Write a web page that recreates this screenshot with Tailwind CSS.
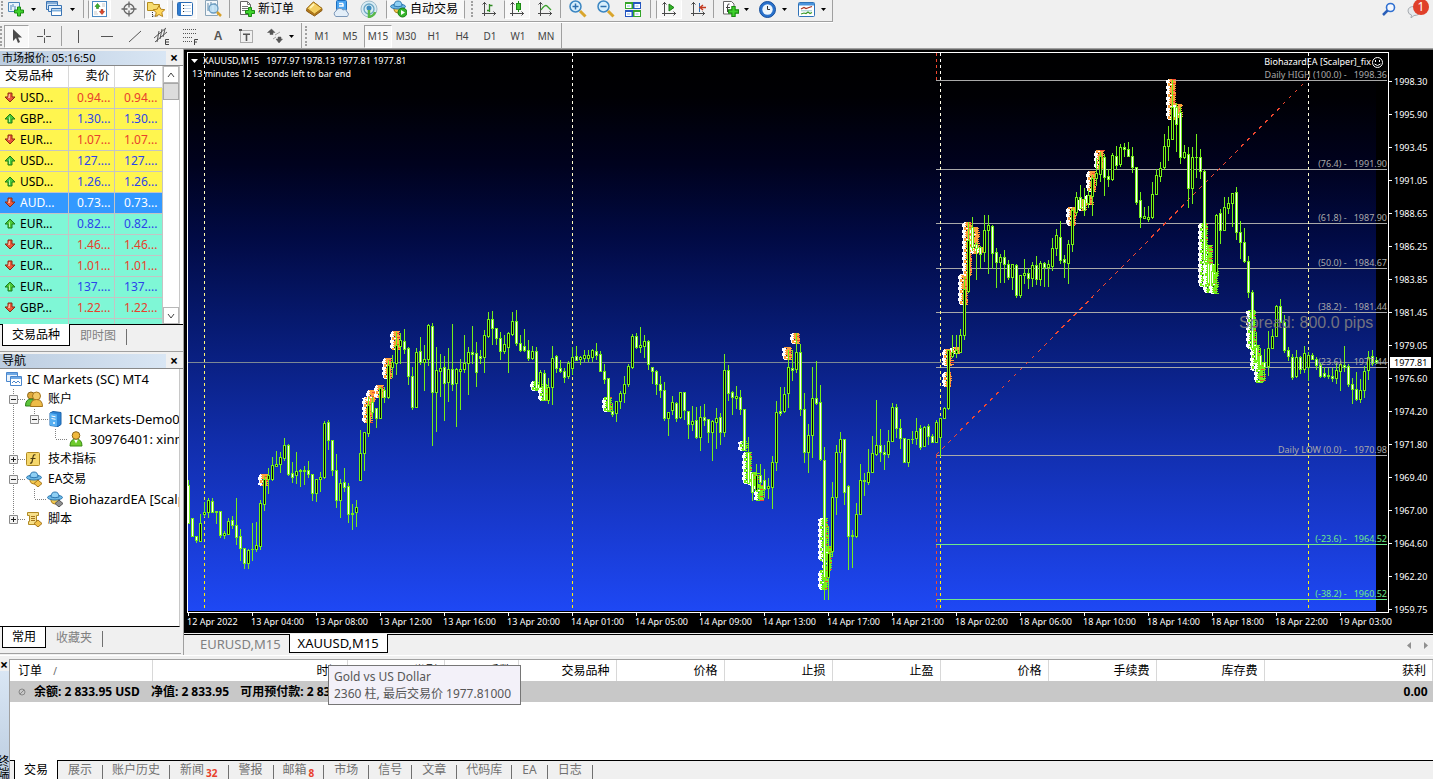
<!DOCTYPE html>
<html lang="zh-CN">
<head>
    <meta charset="UTF-8">
    <meta name="viewport" content="width=device-width, initial-scale=1.0">
    <title>IC Markets (SC) MT4 - XAUUSD,M15</title>
    <script src="https://cdn.jsdelivr.net/npm/@tailwindcss/browser@4"></script>
</head>
<body class="min-h-screen flex flex-col overflow-x-hidden bg-[#f0f0f0] text-black text-xs font-['Noto_Sans','Noto_Sans_CJK_SC',sans-serif]">

<!-- Shared icons -->
<svg class="hidden" aria-hidden="true">
    <symbol id="plus" viewBox="0 0 10 10"><path d="M3.5 .5h3v3h3v3h-3v3h-3v-3h-3v-3h3z" fill="#3fd22c" stroke="#1a8a12"/></symbol>
    <symbol id="down" viewBox="0 0 12 12"><path d="M4 1h4v4h3L6 10 1 5h3z" fill="#ea5a3a" stroke="#8c2a14"/><path d="M5 2h1v4H4z" fill="#ffb49c"/></symbol>
    <symbol id="up" viewBox="0 0 12 12"><path d="M6 1l5 5H8v4H4V6H1z" fill="#4cc838" stroke="#1f7a18"/><path d="M6 3v6H5V5z" fill="#b8f5a4"/></symbol>
    <symbol id="hat" viewBox="0 0 16 16">
        <path d="M4 7h8v3q-1 3-4 3t-4-3z" fill="#f3c94f" stroke="#a97c1b"/>
        <ellipse cx="8" cy="6.500" rx="7.500" ry="2.500" fill="#6db9e6" stroke="#2f78b0"/>
        <path d="M4 6q0-5 4-5t4 5q-4 1.500-8 0z" fill="#8fd0f4" stroke="#2f78b0"/>
    </symbol>
    <symbol id="caret" viewBox="0 0 5 3"><path d="M0 0h5L2.500 3z" fill="#000"/></symbol>
    <symbol id="axes" viewBox="0 0 16 16"><path d="M3.500 1v14M1.500 3.500l2-2 2 2M1 12.500h14M12.500 10.500l2 2-2 2" fill="none" stroke="#4a4a4a"/></symbol>
</svg>

<header class="leading-none">
    <div class="flex h-[23px] items-start">
        <div class="flex h-[22px] items-center border-b border-r border-[#a0a0a0] pb-[3px] shadow-[0_1px_0_#fff]">
            <span class="h-4 w-[3px] border-r-2 border-dotted border-[#a0a0a0]"></span>
            <button class="ml-[5px] flex items-center gap-[7px]" aria-label="新图表">
                <svg class="size-4" viewBox="0 0 16 16"><path d="M.5 1.500h11v9H.5z" fill="#eaf4fc" stroke="#4d86b8"/><path d="M3 4v5M5 3v3M7 5v4" stroke="#4d86b8"/><use href="#plus" x="6" y="5" width="10" height="11"/></svg>
                <svg class="h-[3px] w-[5px]"><use href="#caret"/></svg>
            </button>
            <button class="ml-[10px] flex items-center gap-[8px]" aria-label="配置文件">
                <svg class="size-4" viewBox="0 0 16 16"><path d="M.5 .5h11v8H.5z" fill="#cfe4f7" stroke="#3a74b4"/><path d="M1 2h10" stroke="#3a74b4"/><path d="M2.500 4.500h13v6h-13z" fill="#e7f2fc" stroke="#3a74b4"/><path d="M5.500 7.500h10v7h-10z" fill="#fff" stroke="#3a74b4"/><path d="M6 9.500h9" stroke="#7fb0de" stroke-width="2"/></svg>
                <svg class="h-[3px] w-[5px]"><use href="#caret"/></svg>
            </button>
            <span class="ml-[8px] h-[18px] w-px bg-[#a0a0a0]"></span>
            <button class="ml-[4px] flex h-[19px] w-[23px] items-center justify-center border border-[#a0a0a0] border-b-white border-r-white border-t-transparent bg-[#f8f8f8]" aria-label="市场报价">
                <svg class="size-4" viewBox="0 0 16 16"><rect x=".5" y=".5" width="14" height="15" fill="#fff" stroke="#4a8ac4"/><path d="M5.500 2.500l2.500 3H6.500v2h-2v-2H3z" fill="#3cb52c" stroke="#1f7a18" stroke-width=".6"/><path d="M10 13.500l-2.500-3H9v-2h2v2h1.500z" fill="#e2492c" stroke="#9c2a14" stroke-width=".6"/><path d="M2 11h3M2 13h4M10 3h3M10 5h3" stroke="#c9c9c9"/></svg>
            </button>
            <button class="ml-[6px] flex w-[24px] justify-center" aria-label="数据窗口">
                <svg class="size-4" viewBox="0 0 16 16"><circle cx="8" cy="8" r="5" fill="none" stroke="#666" stroke-width="1.300"/><path d="M8 .5v6M8 9.500v6M.5 8h6M9.500 8h6" stroke="#666" stroke-width="1.300"/></svg>
            </button>
            <button class="ml-[3px] flex h-[19px] w-[24px] items-center justify-center border border-[#a0a0a0] border-b-white border-r-white border-t-transparent bg-[#f8f8f8]" aria-label="导航">
                <svg class="size-[18px]" viewBox="0 0 18 18"><path d="M.5 2.500h5l1 2h6v6H.5z" fill="#f7dc6f" stroke="#b58d1c"/><path d="M5.500 12v5M5.500 16h5" stroke="#333" stroke-dasharray="1 1"/><path d="M12 5.500l1.800 3.700 4 .5-3 2.800.8 4-3.600-2-3.600 2 .8-4-3-2.800 4-.5z" fill="#ffd75a" stroke="#b58218"/></svg>
            </button>
            <button class="ml-[4px] flex h-[19px] w-[25px] items-center justify-center border border-[#a0a0a0] border-b-white border-r-white border-t-transparent bg-[#f8f8f8]" aria-label="终端">
                <svg class="size-4" viewBox="0 0 16 16"><rect x=".5" y="1.500" width="15" height="13" rx="1" fill="#fff" stroke="#2c6cb4"/><path d="M1 2h3v12H1z" fill="#2f7bd0"/><path d="M6 4.500h8M6 7.500h8M6 10.500h8" stroke="#c6d9ec"/><path d="M6 4.500h1M6 7.500h1M6 10.500h1" stroke="#333"/></svg>
            </button>
            <button class="ml-[4px] flex w-[24px] justify-center" aria-label="策略测试">
                <svg class="size-[18px]" viewBox="0 0 18 18"><path d="M1.500 .5h12v15h-12z" fill="#f3f7fa" stroke="#8aa4b8"/><path d="M4 3v8M7 2v9M11 3v9" stroke="#5d86a8"/><circle cx="9.500" cy="8.500" r="4.500" fill="#bfe2f6" fill-opacity=".85" stroke="#6a9cc0" stroke-width="1.300"/><path d="M13 12l4 4" stroke="#d6a02c" stroke-width="2.500"/></svg>
            </button>
            <span class="ml-[4px] h-[18px] w-px bg-[#a0a0a0]"></span>
            <button class="ml-[9px] flex items-center gap-[3px]">
                <svg class="size-4" viewBox="0 0 16 16"><path d="M1.500 .5h7l3 3v10h-10z" fill="#fff" stroke="#666"/><path d="M8.500 .5v3h3M3 5.500h6M3 7.500h6M3 9.500h4" fill="none" stroke="#777"/><use href="#plus" x="6" y="6" width="10" height="10"/></svg>
                新订单
            </button>
            <button class="ml-[11px]" aria-label="元编辑器">
                <svg class="size-[18px]" viewBox="0 0 18 18"><path d="M2 8.500L8.500 2 17 8.500v2L9.500 16 1.500 11z" fill="#b5791a" stroke="#8a5a10"/><path d="M2 8.500L8.500 2 17 8.500 9.500 14z" fill="#f4cf62" stroke="#a5751a"/><path d="M5 8l4-4" stroke="#fff3b4" stroke-width="2"/></svg>
            </button>
            <button class="ml-[9px]" aria-label="服务">
                <svg class="size-[18px]" viewBox="0 0 18 18"><rect x="4.500" y=".5" width="10" height="10" rx="1" fill="#4ba4f0" stroke="#1d6fc0"/><path d="M7 3.500h4M7 6h4v-2.500" fill="none" stroke="#fff" stroke-width="1.500"/><path d="M4 16.500a3 3 0 010-5.500 4 4 0 017-1 3 3 0 014 2 2.500 2.500 0 010 4.500z" fill="#e3eef8" stroke="#7b97b8"/></svg>
            </button>
            <button class="ml-[10px]" aria-label="信号">
                <svg class="size-[18px]" viewBox="0 0 18 18"><circle cx="9" cy="9" r="8" fill="#d9ecf4" stroke="#9fbccb"/><circle cx="9" cy="9" r="5" fill="none" stroke="#6ba6c4" stroke-width="1.300"/><circle cx="9" cy="8" r="2.500" fill="#3c8cc0"/><path d="M9 10v7q5-1 6-5" fill="none" stroke="#58b848" stroke-width="2.500"/></svg>
            </button>
            <button class="ml-[8px] flex h-[19px] items-center gap-[3px] border border-[#a0a0a0] border-b-white border-t-transparent bg-[#f8f8f8] pl-[3px] pr-[6px]">
                <svg class="h-[18px] w-[17px]" viewBox="0 0 17 18"><use href="#hat" width="16" height="16"/><circle cx="12.500" cy="12.500" r="4.500" fill="#35b42a" stroke="#1b7d14"/><path d="M11 10l4 2.500-4 2.500z" fill="#fff"/></svg>
                自动交易
            </button>
            <span class="ml-[5px] h-4 w-[3px] border-r-2 border-dotted border-[#a0a0a0]"></span>
            <button class="ml-[3px] flex w-[26px] justify-center" aria-label="柱状图">
                <svg class="size-4" viewBox="0 0 16 16"><use href="#axes"/><path d="M8.500 3v8M8.500 9.500H6M8.500 4.500h3" fill="none" stroke="#2f8a22" stroke-width="1.300"/></svg>
            </button>
            <button class="ml-[2px] flex h-[19px] w-[26px] items-center justify-center border border-[#a0a0a0] border-b-white border-r-white border-t-transparent bg-[#f8f8f8]" aria-label="阴阳烛">
                <svg class="size-4" viewBox="0 0 16 16"><use href="#axes"/><path d="M9.500 0v11" stroke="#1c8a14"/><rect x="7.500" y="2.500" width="4" height="6" fill="#3ec82e" stroke="#1c8a14"/></svg>
            </button>
            <button class="ml-[2px] flex w-[26px] justify-center" aria-label="折线图">
                <svg class="size-4" viewBox="0 0 16 16"><use href="#axes"/><path d="M4 9q4-6 6-4t4 4" fill="none" stroke="#3aa02c" stroke-width="1.300"/></svg>
            </button>
            <span class="ml-[2px] h-[18px] w-px bg-[#a0a0a0]"></span>
            <button class="ml-[8px]" aria-label="放大">
                <svg class="size-[18px]" viewBox="0 0 18 18"><circle cx="6.500" cy="6.500" r="5.500" fill="#d8effc" stroke="#3b86c2" stroke-width="1.500"/><path d="M3.500 6.500h6M6.500 3.500v6" stroke="#2c6fae" stroke-width="1.500"/><path d="M11 11l5.500 5.500" stroke="#d9a52c" stroke-width="3"/></svg>
            </button>
            <button class="ml-[10px]" aria-label="缩小">
                <svg class="size-[18px]" viewBox="0 0 18 18"><circle cx="6.500" cy="6.500" r="5.500" fill="#d8effc" stroke="#3b86c2" stroke-width="1.500"/><path d="M3.500 6.500h6" stroke="#2c6fae" stroke-width="1.500"/><path d="M11 11l5.500 5.500" stroke="#d9a52c" stroke-width="3"/></svg>
            </button>
            <button class="ml-[10px]" aria-label="平铺窗口">
                <svg class="h-[17px] w-4" viewBox="0 0 16 17"><path d="M0 1h8v7H0zM8 9h8v7H8z" fill="#34a52a"/><path d="M8 1h8v7H8zM0 9h8v7H0z" fill="#2456c0"/><path d="M1 3h5.500v4H1zM9.500 3H15v4H9.500zM1 11h5.500v4H1zM9.500 11H15v4H9.500z" fill="#fff"/><path d="M2 5h3M10.500 5h3M2 13h3M10.500 13h3" stroke="#8ab4e8"/></svg>
            </button>
            <span class="ml-[9px] h-[18px] w-px bg-[#a0a0a0]"></span>
            <button class="ml-[5px] flex h-[19px] w-[26px] items-center justify-center border border-[#a0a0a0] border-b-white border-r-white border-t-transparent bg-[#f8f8f8]" aria-label="自动滚动">
                <svg class="size-4" viewBox="0 0 16 16"><use href="#axes"/><path d="M8 3l5 3.500L8 10z" fill="#35b42a" stroke="#1b7d14"/></svg>
            </button>
            <button class="ml-[2px] flex w-[28px] justify-center" aria-label="图表平移">
                <svg class="size-4" viewBox="0 0 16 16"><use href="#axes"/><path d="M9.500 2v9" stroke="#2c6cb4"/><path d="M10 6.500h6M13 4l-3 2.500L13 9" fill="none" stroke="#c43a20" stroke-width="1.400"/></svg>
            </button>
            <span class="ml-px h-[18px] w-px bg-[#a0a0a0]"></span>
            <button class="ml-[9px] flex items-center gap-[5px]" aria-label="技术指标">
                <svg class="size-4" viewBox="0 0 16 16"><path d="M.5 .5h8l2.500 2.500v10H.5z" fill="#fff" stroke="#666"/><path d="M6.500 3Q4.500 2.500 4.500 5v6M3 6.500h4" fill="none" stroke="#444"/><use href="#plus" x="5" y="5" width="11" height="11"/></svg>
                <svg class="h-[3px] w-[5px]"><use href="#caret"/></svg>
            </button>
            <button class="ml-[10px] flex items-center gap-[6px]" aria-label="时段">
                <svg class="size-[17px]" viewBox="0 0 17 17"><circle cx="8.500" cy="8.500" r="8" fill="#2a72cc" stroke="#174f9c"/><circle cx="8.500" cy="8.500" r="5.200" fill="#eef6fc"/><path d="M8.500 5v3.500H11" fill="none" stroke="#333"/></svg>
                <svg class="h-[3px] w-[5px]"><use href="#caret"/></svg>
            </button>
            <button class="ml-[11px] mr-[6px] flex items-center gap-[6px]" aria-label="模板">
                <svg class="size-[17px]" viewBox="0 0 17 17"><rect x=".5" y="1.500" width="16" height="14" rx="1" fill="#fff" stroke="#2f72b8"/><path d="M1 2h15v2.500H1z" fill="#4a94dc"/><path d="M3 8l3-1.500 2 1 3-1 3-1" fill="none" stroke="#a83220" stroke-width="1.200"/><path d="M3 9.800h11" stroke="#9cc"/><path d="M3 13l3-1 2 .5 2-1.500 2 1.500 2-1" fill="none" stroke="#3a9a2c" stroke-width="1.200"/></svg>
                <svg class="h-[3px] w-[5px]"><use href="#caret"/></svg>
            </button>
        </div>
        <div class="ml-auto flex items-center gap-[11px] pr-1">
            <button aria-label="搜索"><svg class="h-[16px] w-[14px]" viewBox="0 0 14 16"><circle cx="8.500" cy="6.500" r="4" fill="#f4f8ff" stroke="#2f6fd0" stroke-width="1.600"/><path d="M5.500 9.500L1 14" stroke="#2a5fb8" stroke-width="2.500"/></svg></button>
            <button class="relative h-[18px] w-[22px]" aria-label="通知">
                <svg class="h-[18px] w-[22px]" viewBox="0 0 22 18"><path d="M7 6.500q-6 0-6 4.500 0 3 3.500 4l-.5 3 3-2.500q6 0 6-4.500t-6-4.500z" fill="#e6e9ec" stroke="#a6abb0"/></svg>
                <span class="absolute right-0 -top-px size-4 rounded-full bg-[#e0402a] text-center text-xs leading-4 text-white">1</span>
            </button>
        </div>
    </div>
    <div class="flex h-[26px] border-b border-[#a0a0a0]">
        <div class="flex h-[26px] items-center border-r border-[#a0a0a0]">
            <span class="h-5 w-[2px] border-r-2 border-dotted border-[#a0a0a0]"></span>
            <button class="ml-[2px] flex h-[23px] w-[25px] items-center justify-center border border-[#a0a0a0] border-b-white border-r-white bg-[#f8f8f8]" aria-label="光标"><svg class="h-4 w-3" viewBox="0 0 12 16"><path d="M2 1v12l3-3 2 5 2-1-2-4.500h4z" fill="#4a4a4a"/></svg></button>
            <button class="ml-px flex w-[28px] justify-center" aria-label="十字准线"><svg class="size-4" viewBox="0 0 16 16"><path d="M8.500 1v6M8.500 9.500V15M1 8.500h6M10 8.500h5" stroke="#555"/></svg></button>
            <span class="ml-[3px] mr-[2px] h-5 w-px bg-[#a0a0a0]"></span>
            <button class="flex w-[28px] justify-center" aria-label="垂直线"><svg class="size-4" viewBox="0 0 16 16"><path d="M8.500 2v13" stroke="#555"/></svg></button>
            <button class="flex w-[28px] justify-center" aria-label="水平线"><svg class="size-4" viewBox="0 0 16 16"><path d="M3 8.500h12" stroke="#555"/></svg></button>
            <button class="flex w-[28px] justify-center" aria-label="趋势线"><svg class="size-4" viewBox="0 0 16 16"><path d="M3 14L15 3" stroke="#555"/></svg></button>
            <button class="flex w-[28px] justify-center" aria-label="等距通道"><svg class="size-[18px]" viewBox="0 0 18 18"><path d="M1 11L13 1M2 15L14 5M4 15l2-11M7 12l2-10M10 10l2-8" stroke="#555" fill="none"/><path d="M16 12.500h-3.500v5H16M12.500 15H16" stroke="#444" fill="none"/></svg></button>
            <button class="flex w-[28px] justify-center" aria-label="斐波那契回调"><svg class="size-[18px]" viewBox="0 0 18 18"><path d="M2 2.500h14M2 6.500h14M2 10.500h9M2 14.500h9" stroke="#555" stroke-dasharray="1 1"/><path d="M13.500 18v-5.500H17M13.500 15H16" stroke="#444" fill="none"/></svg></button>
            <button class="w-[28px] font-['Liberation_Sans',sans-serif] text-xs font-bold text-[#555]" aria-label="文字">A</button>
            <button class="flex w-[28px] justify-center" aria-label="文字标签"><svg class="size-4" viewBox="0 0 16 16"><rect x="2.500" y="2.500" width="12" height="12" fill="none" stroke="#666" stroke-dasharray="1 1"/><path d="M5 6.200h7M8.500 5.500V13" stroke="#555" stroke-width="1.600"/><path d="M1 1h3v2H1z" fill="#555"/></svg></button>
            <button class="flex items-center gap-[6px] pl-[7px]" aria-label="箭头"><svg class="size-4" viewBox="0 0 16 16"><path d="M4.500 1l3.500 3.500H6v2H3v-2H.5zM8 7l5-3M6 11l3-2M9 11h2V9h3v2h1.500L12 15z" fill="#555" stroke="#555" stroke-width=".5"/></svg><svg class="h-[3px] w-[5px]"><use href="#caret"/></svg></button>
            <span class="ml-[7px] h-full w-px bg-[#a0a0a0]"></span>
            <span class="ml-[2px] mr-px h-5 w-[3px] border-r-2 border-dotted border-[#a0a0a0]"></span>
            <div class="flex pr-px text-[10px] text-[#444]">
                <button class="h-[23px] w-[28px]">M1</button>
                <button class="h-[23px] w-[28px]">M5</button>
                <button class="h-[23px] w-[28px] border border-[#a0a0a0] border-b-white border-r-white bg-[#f8f8f8]">M15</button>
                <button class="h-[23px] w-[28px]">M30</button>
                <button class="h-[23px] w-[28px]">H1</button>
                <button class="h-[23px] w-[28px]">H4</button>
                <button class="h-[23px] w-[28px]">D1</button>
                <button class="h-[23px] w-[28px]">W1</button>
                <button class="h-[23px] w-[28px]">MN</button>
            </div>
        </div>
    </div>
</header>

<div class="flex">
    <aside class="flex w-[184px] shrink-0 flex-col border-r border-[#a0a0a0] pt-[2px]">
        <!-- Market watch -->
        <section>
            <div class="flex h-[15px] items-center border-b border-[#888] pb-px leading-none">
                <h2 class="h-[14px] w-[166px] bg-gradient-to-r from-[#bccde0] to-[#d9e6f4] pl-[2px] text-[11px] leading-[14px]">市场报价: 05:16:50</h2>
                <button class="ml-[2px] w-3 text-sm font-bold" aria-label="关闭">×</button>
            </div>
            <div class="flex h-[259px] overflow-hidden border-b border-black bg-white">
                <div class="h-[258px] w-[163px] overflow-hidden">
                    <table class="w-[162px] table-fixed border-collapse leading-5">
                        <colgroup><col class="w-[68px]"><col class="w-[46px]"><col class="w-[48px]"></colgroup>
                        <thead>
                        <tr class="h-[21px] border-b border-[#d0d0d0]">
                            <th class="border-r border-[#d8d8d8] pl-[5px] text-left font-normal">交易品种</th>
                            <th class="border-r border-[#d8d8d8] pr-1 text-right font-normal">卖价</th>
                            <th class="border-r border-[#d8d8d8] pr-[5px] text-right font-normal">买价</th>
                        </tr>
                        </thead>
                        <tbody id="quotes"></tbody>
                    </table>
                </div>
                <div class="flex w-[17px] flex-col border-r border-[#c8c8c8] bg-white">
                    <button class="flex h-[17px] items-center justify-center border border-[#b8b8b8]" aria-label="向上"><svg class="h-2 w-2" viewBox="0 0 8 8"><path d="M1 6l3-4 3 4" fill="none" stroke="#444"/></svg></button>
                    <span class="h-[17px] border border-[#a8a8a8] bg-[#dcdcdc]"></span>
                    <button class="mt-auto flex h-[17px] items-center justify-center border border-[#b8b8b8]" aria-label="向下"><svg class="h-2 w-2" viewBox="0 0 8 8"><path d="M1 2l3 4 3-4" fill="none" stroke="#444"/></svg></button>
                </div>
            </div>
            <div class="flex h-[22px] pl-[2px]">
                <button class="-mt-px h-[22px] w-[68px] border border-t-0 border-black bg-white">交易品种</button>
                <button class="px-[10px] text-[#808080]">即时图</button>
                <span class="mt-1 h-4 w-px bg-[#707070]"></span>
            </div>
        </section>
        <!-- Navigator -->
        <section class="mt-[4px] flex flex-1 flex-col border-t border-[#a0a0a0] pt-[2px]">
            <div class="flex h-[15px] items-center border-b border-[#888] pb-px leading-none">
                <h2 class="h-[14px] w-[166px] bg-gradient-to-r from-[#bccde0] to-[#d9e6f4] pl-[2px] leading-[14px]">导航</h2>
                <button class="ml-[2px] w-3 text-sm font-bold" aria-label="关闭">×</button>
            </div>
            <div class="relative w-[180px] flex-1 overflow-hidden border-b border-r border-black border-r-[#c8c8c8] bg-white whitespace-nowrap">
                <svg class="absolute left-0 top-0 h-[170px] w-[70px]" viewBox="0 0 70 170">
                    <path d="M13.500 20v130M14 30.500h11M34.500 40v10M35 50.500h13M55.500 60v10M56 70.500h12M14 90.500h11M14 110.500h11M34.500 120v10M35 130.500h12M14 150.500h11" fill="none" stroke="#808080" stroke-dasharray="1 1"/>
                    <path d="M9.500 26.500h8v8h-8zM30.500 46.500h8v8h-8zM9.500 86.500h8v8h-8zM9.500 106.500h8v8h-8zM9.500 146.500h8v8h-8z" fill="#f4f4f4" stroke="#8a8a8a"/>
                    <path d="M11 30.500h5M32 50.500h5M11 90.500h5M13.500 88v5M11 110.500h5M11 150.500h5M13.500 148v5" stroke="#222"/>
                </svg>
                <ul class="leading-5">
                    <li class="flex h-5 items-center gap-[5px] pl-[6px] text-[13px]"><svg class="size-4 shrink-0" viewBox="0 0 16 16"><path d="M.5 1.500h11v9H.5z" fill="#eaf3fc" stroke="#4a86cc"/><path d="M1 2h10v2H1z" fill="#6fa8e4"/><path d="M4.500 5.500h11v9h-11z" fill="#fff" stroke="#4a86cc"/><path d="M5 6h10v2H5z" fill="#6fa8e4"/><path d="M6 12l2-2 2 2 2-2 2 2" fill="none" stroke="#4a86cc"/></svg>IC Markets (SC) MT4</li>
                    <li class="flex h-5 items-center gap-[5px] pl-[25px]"><svg class="h-4 w-[18px]" viewBox="0 0 18 16"><circle cx="6" cy="4.500" r="3.500" fill="#e0a93a" stroke="#8a6418"/><path d="M.5 15q0-7 5.500-7t5.500 7z" fill="#5cc43c" stroke="#2c8018"/><circle cx="11.500" cy="5" r="4" fill="#f2c864" stroke="#a4741c"/><path d="M5.500 15.500q0-7 6-7t6 7z" fill="#eebc48" stroke="#a4741c"/></svg>账户</li>
                    <li class="flex h-5 items-center gap-[6px] pl-[47px] text-[13px]"><svg class="size-4 shrink-0" viewBox="0 0 16 16"><path d="M3 2l3-1.500 8 1v12l-3 2-8-1z" fill="#2e86d8" stroke="#1a62a8"/><path d="M3 2l7 1.500v12L3 14.500z" fill="#58b0f2"/><path d="M4.500 5l4 .8M4.500 7.500l4 .8" stroke="#fff"/><circle cx="7" cy="12" r="1" fill="#fff"/></svg>ICMarkets-Demo03</li>
                    <li class="flex h-5 items-center gap-[6px] pl-[68px] text-[13px]"><svg class="size-4 shrink-0" viewBox="0 0 16 16"><path d="M2 15q0-7 6-7t6 7z" fill="#6ecb2c" stroke="#3a8a14"/><path d="M6 8.500l2 4 2-4z" fill="#fff"/><circle cx="8" cy="4.500" r="3.800" fill="#f0b83c" stroke="#8a6418"/></svg>30976401: xinm</li>
                    <li class="flex h-5 items-center gap-[7px] pl-[25px]"><svg class="size-4 shrink-0" viewBox="0 0 16 16"><rect x="1.500" y="1.500" width="13" height="13" rx="1" fill="#f5d76b" stroke="#b08a24"/><path d="M10.500 4Q8.500 3 8 6l-1 5q-.5 1.500-2 1M5.500 7.500h5" fill="none" stroke="#4a3a10" stroke-width="1.200"/></svg>技术指标</li>
                    <li class="flex h-5 items-center gap-[6px] pl-[26px]"><svg class="size-4 shrink-0" viewBox="0 0 16 16"><use href="#hat"/><path d="M12 9l4 3.500-4 3.500-4-3.500z" fill="#f2c24a" stroke="#a4741c"/></svg>EA交易</li>
                    <li class="flex h-5 items-center gap-[6px] pl-[47px] text-[13px]"><svg class="size-4 shrink-0" viewBox="0 0 16 16"><use href="#hat"/><path d="M12 9l4 3.500-4 3.500-4-3.500z" fill="#909090" stroke="#555"/></svg>BiohazardEA [Scalper]</li>
                    <li class="flex h-5 items-center gap-[6px] pl-[26px]"><svg class="size-4 shrink-0" viewBox="0 0 16 16"><path d="M1.500 1.500h11v3h-2v6h1v3h-9v-3h1v-6h-2z" fill="#f7e08a" stroke="#b08a24"/><path d="M5 5.500h4M5 7.500h4M5 9.500h4" stroke="#a4741c"/><path d="M12 9l4 3.500-4 3.500-4-3.500z" fill="#f2c24a" stroke="#a4741c"/></svg>脚本</li>
                </ul>
            </div>
            <div class="flex h-[22px] pl-[2px]">
                <button class="-mt-px h-[22px] w-[44px] border border-t-0 border-black bg-white">常用</button>
                <button class="px-[10px] text-[#808080]">收藏夹</button>
                <span class="mt-1 h-4 w-px bg-[#707070]"></span>
            </div>
            <div class="mr-[2px] mt-[4px] h-[2px] border-t border-[#a0a0a0]"></div>
        </section>
    </aside>

    <!-- Chart window -->
    <main class="flex min-w-0 flex-1 flex-col">
        <svg id="chart" class="block w-full border-t border-[#696969] bg-black font-['Noto_Sans',sans-serif] text-[9px]" viewBox="184 50 1249 583">
            <defs>
                <linearGradient id="sky" x1="0" y1="0" x2="0" y2="1">
                    <stop offset="0" stop-color="#000"/><stop offset=".08" stop-color="#000004"/><stop offset=".2" stop-color="#00021e"/><stop offset=".33" stop-color="#010a44"/>
                    <stop offset=".5" stop-color="#071b74"/><stop offset=".7" stop-color="#112eac"/><stop offset=".85" stop-color="#183ad0"/><stop offset="1" stop-color="#1e48f4"/>
                </linearGradient>
                <linearGradient id="day" gradientUnits="userSpaceOnUse" x1="0" y1="53" x2="0" y2="611">
                    <stop offset="0" stop-color="#fff"/><stop offset="1" stop-color="#fff000"/>
                </linearGradient>
            </defs>
            <rect x="188" y="53" width="1188" height="558" fill="url(#sky)"/>
            <g id="plot" shape-rendering="crispEdges"></g>
            <g id="labels"></g>
        </svg>
        <div class="mt-[1px] flex h-[21px] border-t border-black pl-[5px] text-[13px]">
            <button class="border-l border-transparent pl-[10px] pr-2 text-[#808080]">EURUSD,M15</button>
            <button class="h-[19px] -mt-px border border-t-0 border-black bg-white px-2 leading-[18px]">XAUUSD,M15</button>
            <div class="ml-auto flex items-center gap-[13px] pr-[5px]">
                <button aria-label="左移"><svg class="h-[7px] w-1" viewBox="0 0 4 7"><path d="M4 0v7L0 3.500z" fill="#909090"/></svg></button>
                <button aria-label="右移"><svg class="h-[7px] w-1" viewBox="0 0 4 7"><path d="M0 0v7l4-3.500z" fill="#909090"/></svg></button>
            </div>
        </div>
    </main>
</div>

<!-- Terminal -->
<section class="relative flex flex-1 border-t border-white pt-[3px]">
    <div class="flex w-[10px] flex-col overflow-hidden border-r border-[#a0a0a0]">
        <button class="h-3 text-left text-sm font-bold leading-[10px]" aria-label="关闭">×</button>
        <div class="flex flex-1 items-end bg-gradient-to-b from-[#d9e6f4] to-[#bccde0]">
            <h2 class="-ml-1 h-6 text-xs leading-3 [writing-mode:vertical-rl]">终端</h2>
        </div>
    </div>
    <div class="flex min-w-0 flex-1 flex-col border-t border-[#a0a0a0] bg-white">
        <table class="w-full table-fixed border-collapse">
            <colgroup>
                <col class="w-[142px]"><col class="w-[195px]"><col class="w-[97px]"><col class="w-[74px]"><col class="w-[98px]"><col class="w-[108px]"><col class="w-[108px]"><col class="w-[108px]"><col class="w-[108px]"><col class="w-[108px]"><col class="w-[108px]"><col>
            </colgroup>
            <thead>
            <tr class="h-[21px] text-right leading-5 *:border-r *:border-[#d8d8d8] *:pr-[6px] *:font-normal">
                <th class="pl-2 text-left">订单 <span class="ml-2 text-[10px] text-[#666]">/</span></th>
                <th>时间</th><th>类型</th><th>手数</th><th>交易品种</th><th>价格</th><th>止损</th><th>止盈</th><th>价格</th><th>手续费</th><th>库存费</th><th>获利</th>
            </tr>
            </thead>
            <tbody>
            <tr class="h-[21px] bg-[#c8c8c8] font-bold leading-5">
                <td colspan="11" class="whitespace-nowrap pl-2">
                    <svg class="mr-2 inline size-2" viewBox="0 0 8 8"><circle cx="4" cy="4" r="3" fill="none" stroke="#888"/><path d="M2 6l4-4" stroke="#888"/></svg>余额: 2 833.95 USD <span class="ml-2">净值: 2 833.95</span> <span class="ml-2">可用预付款: 2 833.95</span>
                </td>
                <td class="pr-[5px] text-right">0.00</td>
            </tr>
            </tbody>
        </table>
        <nav class="mt-auto flex h-[19px] bg-[#f0f0f0] text-[#707070]">
            <span class="w-1 border-t border-black"></span>
            <button class="w-[44px] border-x border-black bg-white text-black">交易</button>
            <div class="flex flex-1 border-t border-black leading-[18px]">
                <button class="px-[10px]">展示</button><span class="mt-1 w-px bg-[#707070]"></span>
                <button class="px-[9px]">账户历史</button><span class="mt-1 w-px bg-[#707070]"></span>
                <button class="flex px-[10px]">新闻<span class="ml-[2px] mt-[3px] text-[10px] font-bold text-[#e8402c]">32</span></button><span class="mt-1 w-px bg-[#707070]"></span>
                <button class="px-[10px]">警报</button><span class="mt-1 w-px bg-[#707070]"></span>
                <button class="flex px-[9px]">邮箱<span class="ml-[2px] mt-[3px] text-[10px] font-bold text-[#e8402c]">8</span></button><span class="mt-1 w-px bg-[#707070]"></span>
                <button class="px-[10px]">市场</button><span class="mt-1 w-px bg-[#707070]"></span>
                <button class="px-[9px]">信号</button><span class="mt-1 w-px bg-[#707070]"></span>
                <button class="px-[10px]">文章</button><span class="mt-1 w-px bg-[#707070]"></span>
                <button class="px-[9px]">代码库</button><span class="mt-1 w-px bg-[#707070]"></span>
                <button class="px-[10px]">EA</button><span class="mt-1 w-px bg-[#707070]"></span>
                <button class="px-[10px]">日志</button><span class="mt-1 w-px bg-[#707070]"></span>
            </div>
        </nav>
    </div>
    <div role="tooltip" class="absolute left-[328px] top-[9px] whitespace-nowrap border border-[#767676] bg-[#f3f1f9] py-[2px] pl-[5px] pr-[9px] leading-[17px] text-[#575757]">
        Gold vs US Dollar<br>2360 柱, 最后交易价 1977.81000
    </div>
</section>

<script>
    // symbol, bid, ask, direction, text colour, row group
    const quotes = [
        ['USD...', '0.94...', 'down', 'red', 'y'], ['GBP...', '1.30...', 'up', 'blue', 'y'], ['EUR...', '1.07...', 'down', 'red', 'y'],
        ['USD...', '127....', 'up', 'blue', 'y'], ['USD...', '1.26...', 'up', 'blue', 'y'], ['AUD...', '0.73...', 'down', 'white', 's'],
        ['EUR...', '0.82...', 'up', 'blue', 'g'], ['EUR...', '1.46...', 'down', 'red', 'g'], ['EUR...', '1.01...', 'down', 'red', 'g'],
        ['EUR...', '137....', 'up', 'blue', 'g'], ['GBP...', '1.22...', 'down', 'red', 'g'], ['', '', '', 'red', 'g'],
    ];
    const rowStyle = { y: 'bg-[#fff54f]', s: 'bg-[#3399ff] text-white', g: 'bg-[#7ff7d6]' };
    const priceStyle = { red: 'text-[#e8402c]', blue: 'text-[#2c44ea]', white: 'text-white' };

    document.getElementById('quotes').innerHTML = quotes.map(([name, price, dir, colour, group]) => `
        <tr class="h-[21px] border-b border-[#c4c4c4] ${rowStyle[group]}">
            <td class="border-r border-[#c4c4c4] whitespace-nowrap pl-1"><svg class="mr-1 inline size-3"><use href="#${dir}"/></svg>${name}</td>
            <td class="border-r border-[#c4c4c4] pr-[3px] text-right ${priceStyle[colour]}">${price}</td>
            <td class="border-r border-[#c4c4c4] pr-1 text-right ${priceStyle[colour]}">${price}</td>
        </tr>`).join('');

    // One bar each: high, body top, body bottom, low; w = falling, b = rising
    const bars = `480 485 523 523w,518 518 536 536w,536 536 540 542w,514 523 541 541b,502 512 514 516b,498 500 512 517b,498 501 512 512w,511 511 512 523b,511 511 535 537w,531 533 535 538b,518 521 534 534b,516 520 525 528w,498 525 537 544w,529 536 548 560w,548 548 563 568w,549 550 563 568b,523 549 549 560b,522 545 549 551b,500 503 546 549b,476 479 504 510b,468 475 479 493b,457 465 479 480b,451 464 466 466b,452 457 464 472b,438 445 458 460b,444 445 474 475w,462 473 477 482w,452 471 475 483b,469 470 471 486b,466 470 471 484b,461 470 474 477w,474 474 493 500w,479 479 493 501b,472 477 479 491b,421 423 477 478b,420 422 440 449w,440 440 470 475w,454 470 500 507w,479 483 500 517b,468 482 487 491w,483 486 514 522w,504 513 514 529b,500 507 512 526b,430 453 480 480b,432 432 453 470b,397 405 433 436b,397 402 412 418w,408 408 418 427w,387 388 418 418b,387 390 397 402w,360 365 397 398b,355 362 367 377b,332 345 363 374b,333 340 346 363b,329 341 349 353w,347 348 376 384w,367 376 407 409w,348 352 407 407b,337 351 362 364w,345 359 362 390b,324 325 359 365b,323 326 392 445w,347 370 392 431b,354 368 371 396b,356 367 383 420w,348 369 382 401b,324 369 384 390w,368 369 383 426b,359 369 371 409b,335 363 369 372b,347 352 363 394b,326 352 354 363w,342 353 372 386w,350 356 358 363w,330 335 357 372b,312 319 336 337b,311 319 328 344w,328 328 338 344w,332 338 351 359w,335 344 351 353b,332 333 347 372b,312 321 334 335b,310 321 343 345w,335 343 350 351w,329 346 350 351w,340 350 358 360w,346 351 358 359b,347 351 388 388w,370 372 387 387b,370 373 400 400w,378 387 400 403b,346 358 387 404b,355 356 368 372w,360 368 371 372w,368 371 377 382w,361 363 376 378b,347 357 368 374b,346 356 360 360w,356 357 359 364b,350 355 358 361b,350 355 358 361b,349 350 357 361b,343 351 355 359w,351 354 371 371w,364 371 379 383w,378 378 410 411w,403 411 414 416w,401 401 413 421b,391 393 401 408b,376 384 393 402b,364 366 384 386b,334 336 367 368b,333 336 347 348w,327 345 347 352b,335 341 346 357b,340 341 364 369w,367 367 371 383w,370 371 384 394w,376 384 390 397w,382 390 418 420w,412 412 418 435b,396 402 410 414b,402 403 418 421w,392 392 417 418b,392 392 410 419w,411 411 424 438w,406 421 424 430b,407 420 437 438w,406 417 437 450b,404 417 420 425w,419 419 432 442w,420 421 432 460b,408 418 422 448b,413 417 432 444w,354 370 432 436b,365 370 393 400w,391 392 397 414w,386 396 398 408b,390 397 409 414w,409 409 450 450w,437 452 483 483w,473 473 492 500w,464 475 490 490b,464 475 482 486w,469 480 489 497w,478 486 488 498b,456 462 487 508b,401 412 462 470b,387 411 413 415w,387 394 411 412b,350 367 393 407b,350 368 370 380w,333 352 369 372b,344 352 409 415w,393 409 452 462w,424 435 452 472b,367 398 435 457b,361 398 403 404w,385 402 459 460w,447 460 577 599w,526 553 577 599b,482 497 551 556b,445 452 497 514b,432 439 452 462b,439 439 492 504w,485 486 536 569w,530 535 536 567b,503 514 536 537b,464 480 514 514b,473 480 481 495b,449 472 482 484b,436 453 472 472b,400 445 454 455b,429 445 452 461w,445 452 454 469w,430 441 454 457b,403 407 441 441b,404 407 428 437w,419 428 438 448w,438 438 462 462w,439 439 462 466b,431 439 439 443b,418 431 438 444b,425 428 447 449w,426 427 446 446b,424 426 436 444w,434 436 442 442w,420 422 442 442b,418 418 437 456b,407 408 418 418b,350 350 408 409b,335 352 356 357b,335 350 353 357b,329 335 352 352b,277 289 335 339b,222 240 291 292b,217 227 247 250w,242 244 248 279w,246 247 254 268w,215 230 252 261b,215 225 230 273b,225 226 253 268w,248 252 262 287w,254 257 262 282b,250 257 264 282w,260 264 277 279w,264 264 277 289b,264 265 295 297w,275 275 295 297b,259 273 275 283b,268 273 278 288w,262 265 278 286b,256 265 279 284w,261 263 279 285b,262 263 267 286w,260 264 267 286b,238 248 266 270b,229 235 248 255b,221 237 260 263w,255 259 262 277w,240 244 263 283b,208 210 244 251b,192 197 212 215b,185 197 208 208w,188 199 210 215w,190 195 203 207b,175 178 196 215b,158 173 178 185b,152 156 174 181b,154 157 177 195w,169 176 179 186w,153 155 179 180b,146 156 165 169w,144 147 164 166b,143 147 149 156w,142 149 156 156w,147 156 167 172w,167 167 202 204w,192 200 217 227w,207 216 218 218b,206 217 219 221b,182 194 217 218b,169 175 194 194b,162 168 176 181b,134 146 167 169b,126 139 146 160b,80 107 139 139b,103 107 124 151w,107 112 157 163w,145 152 157 158b,147 154 188 207w,147 157 188 203b,134 157 157 177b,149 157 171 178w,170 171 260 262w,250 263 283 285w,263 271 283 286w,214 215 272 283b,209 213 230 243w,197 207 230 230b,197 203 208 213b,193 193 203 226b,187 192 232 239w,221 232 242 258w,228 242 261 262w,256 261 292 297w,290 292 348 350w,332 347 360 362w,348 355 365 370w,349 362 367 380w,331 348 366 375b,329 336 348 348b,305 306 336 336b,299 306 322 322w,315 322 350 352w,347 350 356 360w,354 357 377 379w,350 357 376 377b,356 357 369 373w,346 353 369 372b,352 355 367 380b,353 355 359 359w,357 359 365 369w,363 365 376 377w,367 373 376 377w,368 375 376 378w,368 376 378 381w,363 370 378 383b,361 364 371 390b,346 365 367 371w,364 366 384 386w,378 384 389 403w,372 389 399 400w,379 390 399 402b,366 371 390 397b,351 357 370 379b,350 356 363 365w,357 360 362 363w`.split(',');

    // Trade marks: left, top, bottom, width, o = orange / g = green
    const marks = [
        [258, 474, 486, 11, 'o'], [362, 397, 423, 11, 'o'], [366, 390, 402, 9, 'o'], [374, 385, 398, 10, 'o'], [382, 358, 379, 10, 'o'], [390, 331, 350, 10, 'o'],
        [530, 381, 391, 8, 'g'], [538, 384, 401, 9, 'g'], [602, 397, 412, 10, 'g'], [738, 441, 451, 8, 'g'], [742, 452, 484, 10, 'g'], [748, 472, 486, 12, 'g'], [754, 485, 501, 10, 'g'],
        [782, 347, 360, 10, 'o'], [790, 333, 344, 10, 'o'], [818, 518, 561, 10, 'g'], [822, 546, 571, 10, 'g'], [818, 570, 590, 10, 'g'],
        [942, 349, 366, 12, 'o'], [942, 372, 387, 9, 'o'], [950, 347, 354, 10, 'o'], [958, 274, 305, 10, 'o'], [962, 222, 276, 10, 'o'], [970, 227, 254, 6, 'o'], [975, 247, 253, 9, 'o'],
        [1066, 207, 226, 10, 'o'], [1077, 199, 211, 8, 'o'], [1084, 195, 205, 8, 'o'], [1086, 171, 192, 10, 'o'], [1094, 150, 169, 11, 'o'],
        [1166, 79, 120, 10, 'o'], [1173, 104, 118, 8, 'o'], [1198, 223, 287, 10, 'g'], [1203, 245, 293, 10, 'g'], [1209, 264, 294, 7, 'g'],
        [1246, 310, 349, 10, 'g'], [1250, 345, 371, 10, 'g'], [1254, 362, 383, 12, 'g'],
    ];

    const rect = (x, y, w, h, fill) => `<rect x="${x}" y="${y}" width="${w}" height="${h}" fill="${fill}"/>`;
    const text = (x, y, fill, value, extra = '') => `<text x="${x}" y="${y}" fill="${fill}" ${extra}>${value}</text>`;
    let plot = '';
    let labels = '';

    // Frame
    plot += rect(187, 52, 1202, 1, '#fff') + rect(187, 52, 1, 561, '#fff') + rect(1388, 52, 1, 561, '#fff') + rect(187, 612, 1202, 1, '#fff');

    // Last price
    plot += rect(188, 362, 1200, 1, '#7c8894');

    // Fibonacci levels
    const levels = [
        [80, 'Daily HIGH (100.0) -&#160;&#160; 1998.36'], [169, '(76.4) -&#160;&#160; 1991.90'], [223, '(61.8) -&#160;&#160; 1987.90'], [268, '(50.0) -&#160;&#160; 1984.67'], [312, '(38.2) -&#160;&#160; 1981.44'],
        [367, '(23.6) -&#160;&#160; 1977.44'], [455, 'Daily LOW (0.0) -&#160;&#160; 1970.98'], [544, '(-23.6) -&#160;&#160; 1964.52'], [599, '(-38.2) -&#160;&#160; 1960.52'],
    ];
    levels.forEach(([y, label]) => {
        const colour = y > 500 ? '#6fe88a' : '#a9a9a9';
        plot += rect(936, y, 451, 1, colour);
        labels += text(1387, y - 2, colour, label, 'text-anchor="end"');
    });

    // Day separators and range
    [204, 572, 940, 1308].forEach(x => {
        plot += `<path d="M${x + 0.5} 53V611" stroke="url(#day)" stroke-dasharray="3 3"/>`;
        // A vertical line has no bounding box of its own width, hence userSpaceOnUse above
    });
    plot += '<path d="M936.5 53V80M936.5 455V611" stroke="#f04830" stroke-dasharray="3 3"/>';
    plot += '<path d="M936 455L1308 79" stroke="#f04830" stroke-dasharray="4 4.5"/>';

    // Trade marks
    marks.forEach(([x, y1, y2, w, kind]) => {
        const colour = kind === 'o' ? '#ffa03c' : '#74f018';
        for (let y = y1; y < y2; y++) {
            const n = (y * 7 + x * 3) % 11;
            const inset = y === y1 || y === y2 - 1 ? 2 : n % 2;
            plot += rect(x + inset, y, 4, 1, '#fff') + rect(x + 3 + n % 3, y, 5, 1, colour);
            if (n % 4 === 1) plot += rect(x + 2, y, 2, 1, colour);
            if (n % 3 === 0) plot += rect(x + 6, y, w - 6, 1, n % 2 ? '#f04830' : colour);
            if (n === 5) plot += rect(x + 5, y, 1, 1, '#fff');
        }
    });

    // Candles
    bars.forEach((bar, i) => {
        const [high, top, bottom, low] = bar.split(' ').map(v => parseInt(v, 10));
        const x = 188 + i * 4;
        const left = Math.max(x - 1, 188);
        const width = x + 2 - left;
        plot += rect(x, high, 1, low - high + 1, '#74f018') + rect(left, top, width, bottom - top + 1, '#74f018');
        if (bottom - top > 1) plot += rect(x, top + 1, 1, bottom - top - 1, bar.endsWith('w') ? '#fff' : '#000');
    });

    // Price scale
    ['1998.30', '1995.90', '1993.45', '1991.05', '1988.65', '1986.25', '1983.85', '1981.45', '1979.05', '1976.60', '1974.20', '1971.80', '1969.40', '1967.00', '1964.60', '1962.20', '1959.75'].forEach((price, i) => {
        const y = 81 + i * 33;
        plot += rect(1388, y, 4, 1, '#fff');
        labels += text(1394, y + 4, '#fff', price);
    });
    plot += rect(1390, 357, 41, 11, '#fff');
    labels += text(1394, 366, '#000', '1977.81');

    // Time scale
    ['12 Apr 2022', '13 Apr 04:00', '13 Apr 08:00', '13 Apr 12:00', '13 Apr 16:00', '13 Apr 20:00', '14 Apr 01:00', '14 Apr 05:00', '14 Apr 09:00', '14 Apr 13:00', '14 Apr 17:00', '14 Apr 21:00', '18 Apr 02:00', '18 Apr 06:00', '18 Apr 10:00', '18 Apr 14:00', '18 Apr 18:00', '18 Apr 22:00', '19 Apr 03:00'].forEach((time, i) => {
        plot += rect(188 + i * 64, 612, 1, 4, '#fff');
        labels += text(187 + i * 64, 625, '#fff', time);
    });

    // Captions
    labels += '<path d="M191 59h7l-3.500 4z" fill="#fff"/>';
    labels += text(203, 64, '#fff', 'XAUUSD,M15&#160;&#160; 1977.97 1978.13 1977.81 1977.81');
    labels += text(192, 77, '#fff', '13 minutes 12 seconds left to bar end');
    labels += text(1371, 65, '#fff', 'BiohazardEA [Scalper]_fix', 'text-anchor="end"');
    labels += '<circle cx="1377.500" cy="62.500" r="5" fill="none" stroke="#fff"/><path d="M1375.500 60v2M1379.500 60v2M1374.500 64q3 3 6 0" fill="none" stroke="#fff"/>';
    labels += text(1239, 328, '#73737f', 'Spread: 800.0 pips', 'font-size="16" font-family="Liberation Sans, sans-serif"');

    document.getElementById('plot').innerHTML = plot;
    document.getElementById('labels').innerHTML = labels;
</script>
</body>
</html>
